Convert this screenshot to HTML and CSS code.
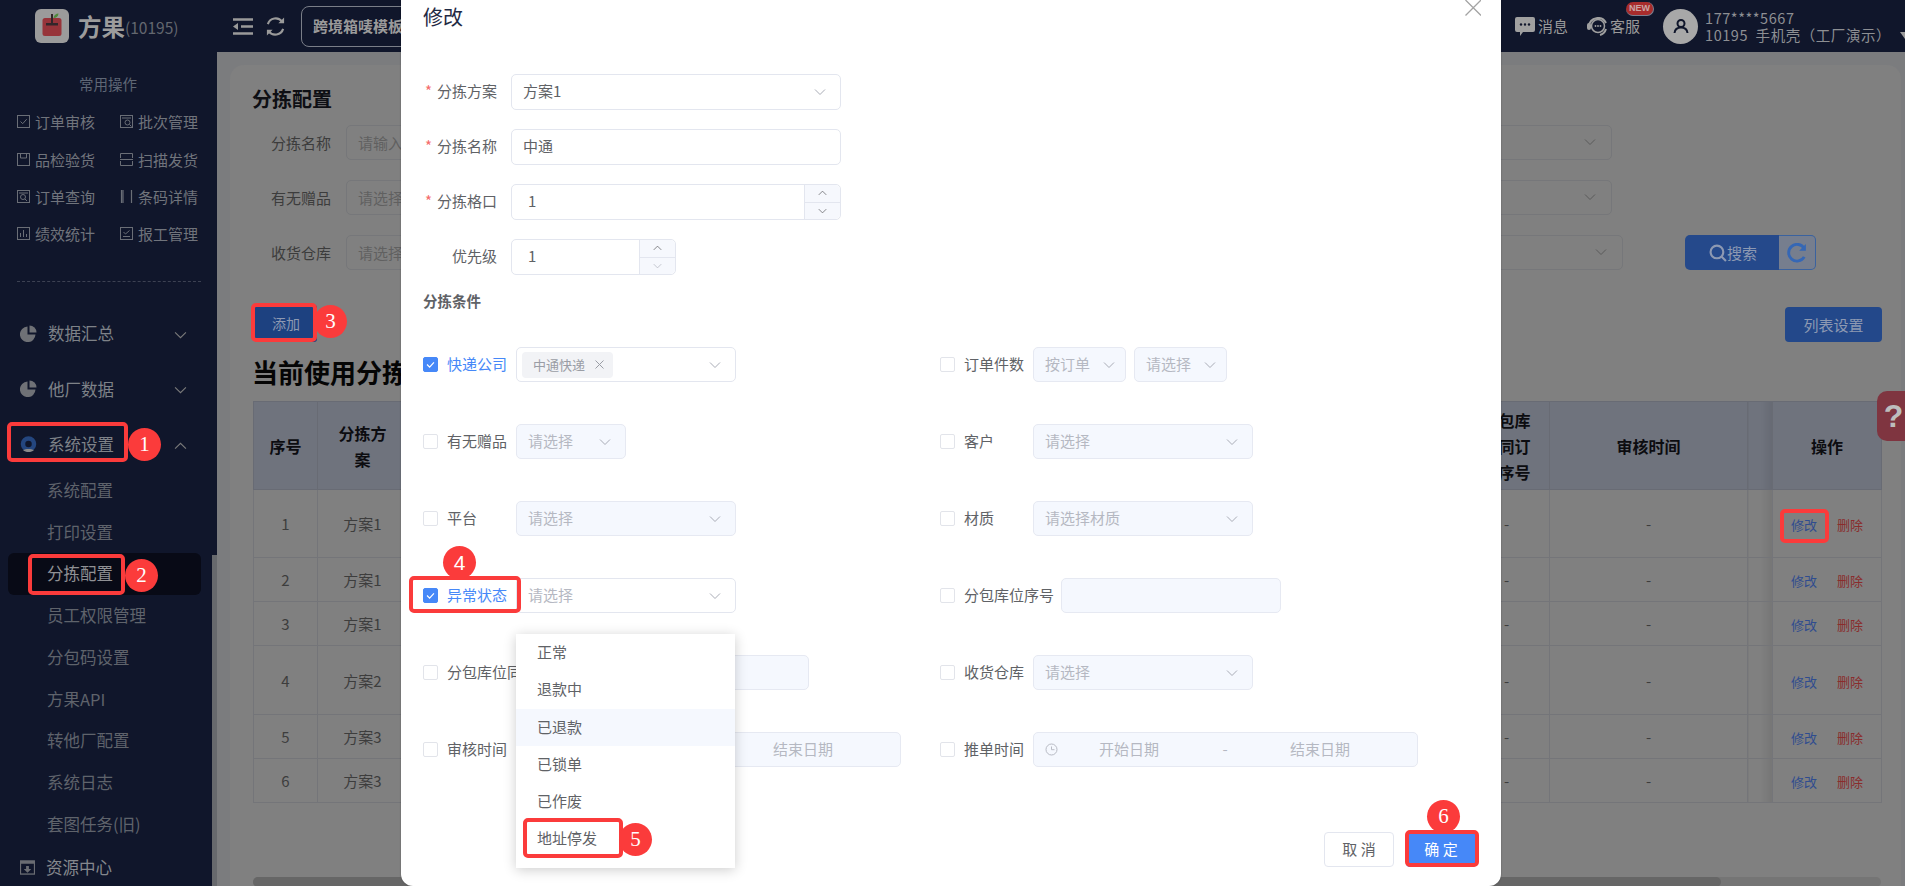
FILE: index.html
```html
<!DOCTYPE html>
<html lang="zh-CN">
<head>
<meta charset="utf-8">
<title>分拣配置</title>
<link rel="stylesheet" href="styles.css">
</head>
<body>
<svg class="defs" width="0" height="0" aria-hidden="true">
  <symbol id="chev" viewBox="0 0 12 7"><path d="M1 1l5 5 5-5" fill="none" stroke="currentColor" stroke-width="1"/></symbol>
  <symbol id="pie" viewBox="0 0 17 17"><path d="M7.500 1.500v8h8a7.800 7.800 0 1 1-8-8z" fill="currentColor"/><path d="M9.500.5a7 7 0 0 1 7 7h-7z" fill="currentColor"/></symbol>
</svg>
<div class="app">
  <header class="topbar">
    <div class="brand">
      <svg class="logo" viewBox="0 0 34 34"><rect width="34" height="34" rx="6" fill="#9b9b9b"/><rect x="7.500" y="9" width="19" height="18" rx="2.500" fill="#97343a"/><rect x="16" y="5" width="2" height="11" fill="#33262a"/><rect x="11" y="14" width="12" height="2.500" fill="#33262a"/><path d="M18.500 9c.5-3 2.500-4.500 5-4.500-.3 2.800-2 4.500-5 4.500z" fill="#4e8a3c"/></svg>
      <span class="brand-name">方果</span><span class="brand-id">(10195)</span>
    </div>
    <svg class="tool-collapse" viewBox="0 0 20 17"><path d="M0 1.500h20M8 8.500h12M0 15.500h20" stroke="#9a9a9a" stroke-width="2.500" fill="none"/><path d="M5 5v7L0 8.500z" fill="#9a9a9a"/></svg>
    <svg class="tool-refresh" viewBox="0 0 22 22"><path d="M3 8.500a8.500 8.500 0 0 1 15-2.500M19 13.500a8.500 8.500 0 0 1-15 2.500" fill="none" stroke="#9a9a9a" stroke-width="2.200"/><path d="M20 1.500v6h-6zM2 20.500v-6h6z" fill="#9a9a9a"/></svg>
    <div class="tab">跨境箱唛模板</div>
    <div class="top-right">
      <svg class="ico-msg" viewBox="0 0 20 19"><path d="M2 0h16a2 2 0 0 1 2 2v11a2 2 0 0 1-2 2H8l-3 4v-4H2a2 2 0 0 1-2-2V2a2 2 0 0 1 2-2z" fill="#a0a0a0"/><circle cx="6" cy="7.500" r="1.200" fill="#10162b"/><circle cx="10" cy="7.500" r="1.200" fill="#10162b"/><circle cx="14" cy="7.500" r="1.200" fill="#10162b"/></svg>
      <span class="top-link">消息</span>
      <svg class="ico-service" viewBox="0 0 21 19"><circle cx="11" cy="9" r="6.500" fill="none" stroke="#a0a0a0" stroke-width="1.500"/><path d="M2 9a9 9 0 0 1 17-3M19 12a9 9 0 0 1-6 6" fill="none" stroke="#a0a0a0" stroke-width="2"/><rect x="0" y="6" width="4" height="7" rx="2" fill="#a0a0a0"/><circle cx="8.500" cy="9" r=".9" fill="#a0a0a0"/><circle cx="11" cy="9" r=".9" fill="#a0a0a0"/><circle cx="13.500" cy="9" r=".9" fill="#a0a0a0"/></svg>
      <span class="top-link service">客服<b class="new">NEW</b></span>
      <span class="avatar"><svg viewBox="0 0 16 16"><circle cx="8" cy="5.500" r="3.500" fill="none" stroke="#10162b" stroke-width="2"/><path d="M1.500 15c.5-4 3-5.500 6.500-5.500s6 1.500 6.500 5.500" fill="none" stroke="#10162b" stroke-width="2"/></svg></span>
      <div class="user"><div>177****5667</div><div>10195&nbsp; 手机壳（工厂演示）</div></div>
      <span class="caret"></span>
    </div>
  </header>
  <div class="body">
    <aside class="side">
      <div class="side-inner">
        <div class="quick-title">常用操作</div>
        <div class="quick">
          <div class="q"><svg viewBox="0 0 13 13"><rect x=".5" y=".5" width="12" height="12" fill="none" stroke="currentColor"/><path d="M3.500 6.500l2.200 2.200 4-4.500" fill="none" stroke="currentColor"/></svg>订单审核</div>
          <div class="q"><svg viewBox="0 0 13 13"><rect x=".5" y=".5" width="12" height="12" fill="none" stroke="currentColor"/><path d="M2 3h9" stroke="currentColor"/><circle cx="7.500" cy="7.500" r="2.500" fill="none" stroke="currentColor"/><path d="M9.500 9.500l2 2" stroke="currentColor"/></svg>批次管理</div>
          <div class="q"><svg viewBox="0 0 13 13"><rect x=".5" y=".5" width="12" height="12" fill="none" stroke="currentColor"/><path d="M3.500 .5v4.500h6V.5" fill="none" stroke="currentColor"/></svg>品检验货</div>
          <div class="q"><svg viewBox="0 0 13 13"><path d="M.5 5V.5h12V5M.5 8v4.500h12V8M0 6.500h13" fill="none" stroke="currentColor"/></svg>扫描发货</div>
          <div class="q"><svg viewBox="0 0 13 13"><rect x=".5" y=".5" width="12" height="12" fill="none" stroke="currentColor"/><path d="M2 3h9" stroke="currentColor"/><circle cx="6" cy="7" r="2.500" fill="none" stroke="currentColor"/><path d="M8 9l2 2" stroke="currentColor"/></svg>订单查询</div>
          <div class="q"><svg viewBox="0 0 13 13"><path d="M1.500 0v13M3 0v13M11.500 0v13" stroke="currentColor" stroke-width="1.200"/></svg>条码详情</div>
          <div class="q"><svg viewBox="0 0 13 13"><rect x=".5" y=".5" width="12" height="12" fill="none" stroke="currentColor"/><path d="M3.500 10V6M6.500 10V3M9.500 10V7" stroke="currentColor"/></svg>绩效统计</div>
          <div class="q"><svg viewBox="0 0 13 13"><rect x=".5" y=".5" width="12" height="12" fill="none" stroke="currentColor"/><path d="M3.500 5l2 2 4-3.500M3 9.500h7" fill="none" stroke="currentColor"/></svg>报工管理</div>
        </div>
        <div class="dash"></div>
        <div class="nav-item"><svg class="nav-ico"><use href="#pie"/></svg><span>数据汇总</span><svg class="nav-chev"><use href="#chev"/></svg></div>
        <div class="nav-item"><svg class="nav-ico"><use href="#pie"/></svg><span>他厂数据</span><svg class="nav-chev"><use href="#chev"/></svg></div>
        <div class="nav-item open"><svg class="nav-ico" viewBox="0 0 17 17"><circle cx="8.500" cy="8" r="5.500" fill="none" stroke="#24467f" stroke-width="4.500"/><path d="M3 14c3-1.500 8-1.500 11 0-3 2.800-8 2.800-11 0z" fill="#8a8a8a"/></svg><span>系统设置</span><svg class="nav-chev up"><use href="#chev"/></svg></div>
        <div class="sub">系统配置</div>
        <div class="sub">打印设置</div>
        <div class="sub active">分拣配置</div>
        <div class="sub">员工权限管理</div>
        <div class="sub">分包码设置</div>
        <div class="sub">方果API</div>
        <div class="sub">转他厂配置</div>
        <div class="sub">系统日志</div>
        <div class="sub">套图任务(旧)</div>
        <div class="nav-item res"><svg class="nav-ico" viewBox="0 0 16 16"><rect x=".5" y="1" width="15" height="14" fill="none" stroke="currentColor" stroke-width="1.400"/><path d="M1 1h14v3H1z" fill="currentColor"/><path d="M6.500 6.500h3v3H12l-4 4-4-4h2.500z" fill="currentColor"/></svg><span>资源中心</span></div>
      </div>
      <div class="side-scroll"><span></span></div>
    </aside>
    <main class="main">
      <section class="card">
        <h2 class="card-title">分拣配置</h2>
        <div class="filters">
          <div class="f-row"><label>分拣名称</label><div class="f-input">请输入<svg class="f-chev"><use href="#chev"/></svg></div></div>
          <div class="f-row"><label>有无赠品</label><div class="f-input">请选择<svg class="f-chev"><use href="#chev"/></svg></div></div>
          <div class="f-row"><label>收货仓库</label><div class="f-input wide">请选择<svg class="f-chev"><use href="#chev"/></svg></div>
            <button class="search"><svg viewBox="0 0 17 17"><circle cx="7.500" cy="7.500" r="6" fill="none" stroke="#8d99b2" stroke-width="2"/><path d="M12 12l4 4" stroke="#8d99b2" stroke-width="2"/></svg>搜索</button><button class="reset"><svg viewBox="0 0 18 18"><path d="M15.500 12.500a7.500 7.500 0 1 1 0-7.500" fill="none" stroke="#3567b5" stroke-width="2.600"/><path d="M17 1v6h-6z" fill="#3567b5"/></svg></button>
          </div>
        </div>
        <div class="actions"><button class="btn-add">添加</button><button class="btn-list">列表设置</button></div>
        <h2 class="current">当前使用分拣方案</h2>
        <table class="grid">
          <colgroup><col class="c1"><col class="c2"><col class="c3"><col class="c4"><col class="c5"><col class="c6"><col class="c7"></colgroup>
          <thead><tr><th>序号</th><th class="wrap">分拣方案</th><th></th><th class="wrap">分包库位同订单序号</th><th>审核时间</th><th class="fade"></th><th>操作</th></tr></thead>
          <tbody>
            <tr class="h68"><td>1</td><td>方案1</td><td></td><td>-</td><td>-</td><td class="fade"></td><td><a class="edit">修改</a><a class="del">删除</a></td></tr>
            <tr class="h44"><td>2</td><td>方案1</td><td></td><td>-</td><td>-</td><td class="fade"></td><td><a class="edit">修改</a><a class="del">删除</a></td></tr>
            <tr class="h44"><td>3</td><td>方案1</td><td></td><td>-</td><td>-</td><td class="fade"></td><td><a class="edit">修改</a><a class="del">删除</a></td></tr>
            <tr class="h69"><td>4</td><td>方案2</td><td></td><td>-</td><td>-</td><td class="fade"></td><td><a class="edit">修改</a><a class="del">删除</a></td></tr>
            <tr class="h44"><td>5</td><td>方案3</td><td></td><td>-</td><td>-</td><td class="fade"></td><td><a class="edit">修改</a><a class="del">删除</a></td></tr>
            <tr class="h44"><td>6</td><td>方案3</td><td></td><td>-</td><td>-</td><td class="fade"></td><td><a class="edit">修改</a><a class="del">删除</a></td></tr>
          </tbody>
        </table>
        <div class="hscroll"><span></span></div>
      </section>
    </main>
  </div>
  <div class="help">?</div>

  <div class="modal">
    <div class="modal-title">修改</div>
    <svg class="close" viewBox="0 0 16 16"><path d="M.5 0l15.500 15.500M16 0L.5 15.500" stroke="#a3a3a3" stroke-width="1.300" fill="none"/></svg>
    <div class="form">
      <div class="row"><label class="lab"><i>*</i>分拣方案</label><div class="sel w330"><span class="val">方案1</span><svg class="chev"><use href="#chev"/></svg></div></div>
      <div class="row"><label class="lab"><i>*</i>分拣名称</label><div class="sel w330"><span class="val">中通</span></div></div>
      <div class="row"><label class="lab"><i>*</i>分拣格口</label><div class="num w330"><span class="val">1</span><div class="step"><span><svg class="chev-s up"><use href="#chev"/></svg></span><span><svg class="chev-s"><use href="#chev"/></svg></span></div></div></div>
      <div class="row"><label class="lab">优先级</label><div class="num w165"><span class="val">1</span><div class="step off"><span><svg class="chev-s up"><use href="#chev"/></svg></span><span><svg class="chev-s"><use href="#chev"/></svg></span></div></div></div>
    </div>
    <div class="sec">分拣条件</div>
    <div class="conds">
      <div class="cond on"><span class="ck"><svg viewBox="0 0 15 15"><path d="M3.500 7.500l3 3 5-5.500" fill="none" stroke="#fff" stroke-width="1.400"/></svg></span><span class="cl">快递公司</span><div class="box w220 white"><span class="tag">中通快递<svg viewBox="0 0 9 9"><path d="M.5.500l8 8M8.500.500l-8 8" stroke="#9a9da5" stroke-width="1"/></svg></span><svg class="chev"><use href="#chev"/></svg></div></div>
      <div class="cond"><span class="ck"></span><span class="cl">订单件数</span><div class="box w93"><span class="ph">按订单</span><svg class="chev"><use href="#chev"/></svg></div><div class="box w93 gap8"><span class="ph">请选择</span><svg class="chev"><use href="#chev"/></svg></div></div>
      <div class="cond"><span class="ck"></span><span class="cl">有无赠品</span><div class="box w110"><span class="ph">请选择</span><svg class="chev"><use href="#chev"/></svg></div></div>
      <div class="cond"><span class="ck"></span><span class="cl">客户</span><div class="box w220"><span class="ph">请选择</span><svg class="chev"><use href="#chev"/></svg></div></div>
      <div class="cond"><span class="ck"></span><span class="cl">平台</span><div class="box w220"><span class="ph">请选择</span><svg class="chev"><use href="#chev"/></svg></div></div>
      <div class="cond"><span class="ck"></span><span class="cl">材质</span><div class="box w220"><span class="ph">请选择材质</span><svg class="chev"><use href="#chev"/></svg></div></div>
      <div class="cond on"><span class="ck"><svg viewBox="0 0 15 15"><path d="M3.500 7.500l3 3 5-5.500" fill="none" stroke="#fff" stroke-width="1.400"/></svg></span><span class="cl">异常状态</span><div class="box w220 white"><span class="ph">请选择</span><svg class="chev"><use href="#chev"/></svg></div></div>
      <div class="cond"><span class="ck"></span><span class="cl long">分包库位序号</span><div class="box w220"></div></div>
      <div class="cond"><span class="ck"></span><span class="cl long">分包库位同订单序号</span><div class="box w220"></div></div>
      <div class="cond"><span class="ck"></span><span class="cl">收货仓库</span><div class="box w220"><span class="ph">请选择</span><svg class="chev"><use href="#chev"/></svg></div></div>
      <div class="cond"><span class="ck"></span><span class="cl">审核时间</span><div class="date"><svg viewBox="0 0 13 13"><circle cx="6.500" cy="6.500" r="5.500" fill="none" stroke="#b8bbc4"/><path d="M6.500 3.500v3.200h3" fill="none" stroke="#b8bbc4"/></svg><span>开始日期</span><span>-</span><span>结束日期</span></div></div>
      <div class="cond"><span class="ck"></span><span class="cl">推单时间</span><div class="date"><svg viewBox="0 0 13 13"><circle cx="6.500" cy="6.500" r="5.500" fill="none" stroke="#b8bbc4"/><path d="M6.500 3.500v3.200h3" fill="none" stroke="#b8bbc4"/></svg><span>开始日期</span><span>-</span><span>结束日期</span></div></div>
    </div>
    <div class="foot"><button class="cancel">取 消</button><button class="ok">确 定</button></div>
  </div>

  <ul class="menu">
    <li>正常</li><li>退款中</li><li class="hover">已退款</li><li>已锁单</li><li>已作废</li><li>地址停发</li>
  </ul>

  <div class="mark m1"></div><div class="dot d1">1</div>
  <div class="mark m2"></div><div class="dot d2">2</div>
  <div class="mark m3"></div><div class="dot d3">3</div>
  <div class="mark m7"></div>
  <div class="dot d4 sans">4</div><div class="mark m4"></div>
  <div class="mark m5"></div><div class="dot d5">5</div>
  <div class="dot d6">6</div><div class="mark m6"></div>
</div>
</body>
</html>
```

FILE: styles.css
```css
* { box-sizing: border-box; }
html, body { margin: 0; height: 100%; overflow: hidden; }
body { font-family: "Noto Sans CJK SC", "Noto Sans", sans-serif; font-size: 15px; color: #606266; background: #7b7c7e; }
.defs { position: absolute; }
button { font: inherit; cursor: pointer; }
.app { position: relative; width: 1905px; height: 886px; display: flex; flex-direction: column; overflow: hidden; }

/* top bar */
.topbar { height: 52px; flex: none; background: #10162b; display: flex; align-items: center; color: #9a9a9a; }
.brand { width: 233px; padding-left: 35px; display: flex; align-items: center; flex: none; }
.logo { width: 34px; height: 34px; margin-right: 9px; }
.brand-name { font-size: 23.500px; font-weight: 700; line-height: 34px; color: #9c9c9c; }
.brand-id { font-size: 15.500px; color: #63676f; margin-top: 2px; }
.tool-collapse { width: 20px; height: 17px; margin-right: 12px; flex: none; }
.tool-refresh { width: 21px; height: 21px; margin-right: 15px; flex: none; }
.tab { height: 41px; width: 300px; flex: none; border: 1px solid #7a7e88; border-radius: 8px; padding-left: 11px; line-height: 38px; font-weight: 700; font-size: 15px; color: #9a9a9a; }
.top-right { margin-left: auto; display: flex; align-items: center; position: relative; width: 390px; }
.ico-msg { width: 20px; height: 19px; margin-right: 3px; flex: none; }
.top-link { font-size: 15px; color: #9a9a9a; position: relative; line-height: 20px; }
.ico-service { width: 21px; height: 19px; margin: 0 2px 0 19px; flex: none; }
.new { position: absolute; left: 16px; top: -14px; width: 28px; height: 14px; border-radius: 7px; background: #a82c2c; border-right: 1px solid #7b7f90; border-bottom: 1px solid #7b7f90; color: #c9a5a5; font-size: 9px; line-height: 13px; text-align: center; font-weight: 700; font-family: "Liberation Sans", sans-serif; }
.avatar { width: 35px; height: 35px; border-radius: 50%; background: #a8a8a8; display: flex; align-items: center; justify-content: center; margin: 0 7px 0 23px; flex: none; }
.avatar svg { width: 16px; height: 16px; }
.user { font-size: 14.500px; line-height: 17px; color: #8d8f93; white-space: nowrap; letter-spacing: .55px; }
.caret { position: absolute; right: -5px; top: 23px; width: 0; height: 0; border: 5px solid transparent; border-top: 7px solid #9a9a9a; }

/* body */
.body { flex: 1; display: flex; min-height: 0; }
.side { width: 217px; flex: none; background: #10162b; position: relative; overflow: hidden; display: flex; }
.side-inner { width: 212px; flex: none; }
.side-scroll { width: 5px; flex: none; position: relative; }
.side-scroll span { position: absolute; left: 0; right: 0; top: 503px; bottom: 0; background: #67696d; }
.quick-title { margin-top: 22px; line-height: 20px; text-align: center; font-size: 14.500px; color: #5f6775; padding-left: 4px; }
.quick { margin: 9px 0 0 17px; display: grid; grid-template-columns: 103px 90px; grid-auto-rows: 37.400px; }
.q { display: flex; align-items: center; font-size: 15px; color: #70747c; white-space: nowrap; }
.q svg { width: 13px; height: 13px; margin-right: 5px; flex: none; color: #6a6e76; }
.dash { margin: 28px 11px 24px 17px; border-top: 1px dashed #3c4152; }
.nav-item { height: 55.500px; display: flex; align-items: center; padding-left: 20px; font-size: 16.500px; color: #7e8288; position: relative; }
.nav-item.open { margin-bottom: -2px; }
.nav-ico { width: 17px; height: 17px; margin-right: 11px; color: #6f7176; flex: none; }
.nav-chev { position: absolute; left: 174px; top: 25px; width: 13px; height: 8px; color: #7a7a7a; }
.nav-chev.up { transform: rotate(180deg); }
.sub { height: 41.700px; line-height: 41.700px; padding-left: 39px; margin: 0 11px 0 8px; font-size: 16.500px; color: #5f636b; border-radius: 6px; }
.sub.active { background: #080a16; color: #8f9094; }
.res { color: #85888d; height: 44px; }
.res .nav-ico { width: 15px; height: 15px; margin-right: 11px; color: #6a6c72; }

/* main */
.main { flex: 1; min-width: 0; padding: 13px 4px 0 13px; background: #7b7c7e; }
.card { height: 821px; background: #808080; border-radius: 14px 14px 0 0; padding: 22px 0 0 23px; }
.card-title { margin: 0 0 0 -1px; font-size: 20px; line-height: 24px; font-weight: 700; color: #0e0f14; }
.filters { margin-top: 14px; display: flex; flex-direction: column; gap: 20px; }
.f-row { display: flex; align-items: center; height: 35px; padding-left: 18px; }
.f-row label { width: 61px; margin-right: 14px; color: #3c3c3c; white-space: nowrap; }
.f-input { width: 1266px; height: 35px; border: 1px solid #76777a; border-radius: 5px; padding-left: 11px; line-height: 33px; color: #606060; position: relative; }
.f-input.wide { width: 1277px; }
.f-chev { position: absolute; right: 15px; top: 12px; width: 12px; height: 8px; color: #5a5a5a; }
.search { width: 94px; height: 35px; margin-left: 62px; border: 0; border-radius: 5px 0 0 5px; background: #25498b; color: #8d99b2; display: flex; align-items: center; justify-content: center; padding: 0 0 0 2px; }
.search svg { width: 18px; height: 18px; }
.reset { width: 37px; height: 35px; border: 1px solid #3a629f; border-left: 0; border-radius: 0 5px 5px 0; background: #767e8e; display: flex; align-items: center; justify-content: center; padding: 0; }
.reset svg { width: 20px; height: 20px; }
.actions { margin-top: 34px; display: flex; align-items: center; width: 1629px; justify-content: space-between; height: 38px; }
.btn-add { width: 62px; height: 37px; margin-left: 2px; border: 0; border-radius: 3px; background: #1d4180; color: #8d99b2; padding: 0; font-size: 14px; }
.btn-list { width: 97px; height: 35px; border: 0; border-radius: 4px; background: #23488a; color: #8d99b2; padding: 0; font-size: 15px; margin-top: 2px; }
.current { margin: 12px 0 11px -1px; font-size: 26px; line-height: 36px; font-weight: 700; color: #050505; white-space: nowrap; }
.grid { width: 1628px; table-layout: fixed; border-collapse: collapse; color: #3d3d3d; font-size: 15px; text-align: center; }
.c1 { width: 64px; } .c2 { width: 90px; } .c3 { width: 1056px; } .c4 { width: 86px; } .c5 { width: 198px; } .c6 { width: 25px; } .c7 { width: 109px; }
.grid th { height: 88px; background: #6f737d; color: #0c0c10; font-size: 16px; line-height: 26px; font-weight: 700; border: 1px solid #686b74; padding: 0; }
.grid th.wrap { padding: 0 18px; }
.grid td { border: 1px solid #747579; padding: 0; }
.grid .fade { padding: 0; background-image: linear-gradient(90deg, transparent 50%, rgba(0, 0, 0, .08)); }
.h68 { height: 68px; } .h44 { height: 44px; } .h69 { height: 69px; }
.edit { color: #2f4c8f; font-size: 13px; margin-right: 20px; }
.del { color: #8a2c2c; font-size: 13px; }
.hscroll { margin-top: 74px; width: 1628px; height: 10px; background: #757575; border-radius: 5px; }
.hscroll span { display: block; width: 1468px; height: 10px; background: #666; border-radius: 5px; }
.help { position: absolute; left: 1877px; top: 391px; width: 30px; height: 50px; padding-left: 3px; background: #7f3540; border-radius: 10px 0 0 10px; color: #bdbdbd; font: 700 32px/50px "Liberation Sans", sans-serif; text-align: center; }

/* modal */
.modal { position: absolute; left: 401px; top: 0; width: 1100px; height: 886px; background: #fff; border-radius: 0 0 12px 12px; display: flex; flex-direction: column; padding: 2px 0 0 22px; box-shadow: 0 0 2px rgba(0,0,0,.3); }
.modal-title { font-size: 20px; line-height: 30px; color: #1f2a44; }
.close { position: absolute; left: 1064px; top: 0; width: 16px; height: 16px; }
.form { margin-top: 42px; display: flex; flex-direction: column; gap: 19px; }
.row { display: flex; align-items: center; height: 36px; }
.lab { width: 74px; margin-right: 14px; text-align: right; white-space: nowrap; padding-bottom: 3px; }
.lab i { color: #f56c6c; font-style: normal; margin-right: 5px; }
.sel, .num { height: 36px; border: 1px solid #e3e6ef; border-radius: 5px; display: flex; align-items: center; position: relative; }
.w330 { width: 330px; } .w165 { width: 165px; }
.sel { padding-left: 11px; }
.val { color: #606266; padding-bottom: 3px; }
.num { padding-left: 16px; }
.chev { position: absolute; right: 14px; top: 50%; width: 12px; height: 8px; margin-top: -4px; color: #a9acb6; }
.step { position: absolute; right: 0; top: 0; bottom: 0; width: 36px; background: #f6f8fd; border-left: 1px solid #e3e6ef; border-radius: 0 5px 5px 0; display: flex; flex-direction: column; color: #606266; }
.step.off { color: #b4b7c0; }
.step span { flex: 1; display: flex; align-items: center; justify-content: center; }
.step span + span { border-top: 1px solid #e3e6ef; }
.chev-s { width: 9px; height: 6px; }
.chev-s.up { transform: rotate(180deg); }
.step .chev-s.up { color: #606266; }
.sec { margin-top: 15px; line-height: 22px; font-size: 14.500px; font-weight: 700; color: #606266; }
.conds { margin-top: 35px; display: grid; grid-template-columns: 517px 1fr; grid-auto-rows: 35px; row-gap: 42px; }
.cond { display: flex; align-items: center; white-space: nowrap; }
.ck { width: 15px; height: 15px; border: 1px solid #e2e4ea; border-radius: 2px; margin-right: 9px; flex: none; background: #fff; }
.on .ck { background: #4688f8; border-color: #4688f8; }
.ck svg { display: block; width: 13px; height: 13px; }
.cl { width: 69px; flex: none; padding-bottom: 2px; }
.cl.long { width: auto; margin-right: 7px; }
.on .cl { color: #4688f8; }
.box { height: 35px; border: 1px solid #e6e9f2; border-radius: 5px; background: #f5f8fe; display: flex; align-items: center; padding-left: 11px; position: relative; flex: none; }
.box.white { background: #fff; border-color: #e3e6ef; padding-left: 5px; }
.box.white .ph { padding-left: 6px; }
.w220 { width: 220px; } .w110 { width: 110px; } .w93 { width: 93px; }
.gap8 { margin-left: 8px; }
.box.w93 .chev { right: 10px; }
.ph { color: #b5b8c2; padding-bottom: 2px; }
.tag { height: 26px; width: 91px; background: #f2f3f6; border-radius: 4px; font-size: 13px; color: #9a9da5; display: flex; align-items: center; padding-left: 11px; }
.tag svg { width: 9px; height: 9px; margin-left: 10px; }
.date { width: 385px; height: 35px; border: 1px solid #e6e9f2; border-radius: 5px; background: #f5f8fe; display: grid; grid-template-columns: 15px 138px 54px 136px; align-items: center; padding-left: 11px; color: #b5b8c2; text-align: center; flex: none; }
.date span { padding-bottom: 2px; }
.date svg { width: 13px; height: 13px; }
.foot { margin-top: auto; display: flex; justify-content: flex-end; gap: 12px; padding: 0 25px 19px 0; }
.cancel, .ok { width: 70px; height: 35px; border-radius: 4px; padding: 0 0 2px; font-size: 15px; }
.cancel { background: #fff; border: 1px solid #e3e6ef; color: #606266; }
.ok { background: #4688f8; border: 0; color: #fff; }

/* dropdown */
.menu { position: absolute; left: 516px; top: 634px; width: 219px; height: 234px; margin: 0; padding: 0 0 4px; list-style: none; background: #fff; box-shadow: 0 2px 12px rgba(0, 0, 0, .2); color: #606266; }
.menu li { height: 37.300px; line-height: 35px; padding-left: 21px; }
.menu .hover { background: #f5f8fe; }

/* annotations */
.mark { position: absolute; border: 4px solid #fb3b3b; border-radius: 5px; }
.m1 { left: 7px; top: 422px; width: 121px; height: 40px; }
.m2 { left: 28px; top: 554px; width: 97px; height: 41px; }
.m3 { left: 251px; top: 303px; width: 66px; height: 39px; }
.m4 { left: 409px; top: 576px; width: 112px; height: 37px; }
.m5 { left: 523px; top: 818px; width: 100px; height: 40px; }
.m6 { left: 1405px; top: 830px; width: 74px; height: 37px; }
.m7 { left: 1780px; top: 509px; width: 49px; height: 34px; }
.dot { position: absolute; width: 33px; height: 33px; border-radius: 50%; background: #fb3b3b; color: #fff; font: 400 21px/33px "Liberation Serif", serif; text-align: center; }
.dot.sans { font-family: "Liberation Sans", sans-serif; }
.d1 { left: 128px; top: 428px; }
.d2 { left: 125px; top: 559px; }
.d3 { left: 314px; top: 305px; }
.d4 { left: 443px; top: 546px; }
.d5 { left: 619px; top: 823px; }
.d6 { left: 1427px; top: 800px; }
```
